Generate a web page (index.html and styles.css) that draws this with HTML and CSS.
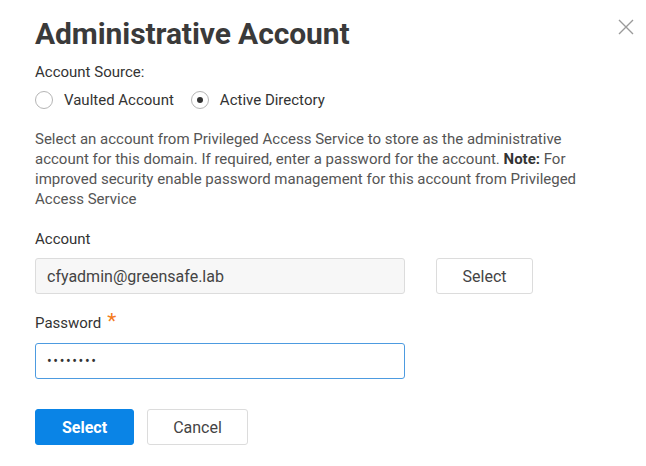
FILE: index.html
```html
<!DOCTYPE html>
<html>
<head>
<meta charset="utf-8">
<link rel="stylesheet" href="styles.css">
</head>
<body>
<div class="dialog">
  <div class="header">
    <h1 class="title">Administrative Account</h1>
    <svg class="close" width="16" height="16" viewBox="0 0 16 16"><path d="M1 1L15 15M15 1L1 15" stroke="#9a9a9a" stroke-width="1.4" fill="none"/></svg>
  </div>
  <div class="label source-label">Account Source:</div>
  <div class="radios">
    <label class="radio"><span class="circle"></span><span>Vaulted Account</span></label>
    <label class="radio"><span class="circle checked"></span><span>Active Directory</span></label>
  </div>
  <p class="desc">Select an account from Privileged Access Service to store as the administrative account for this domain. If required, enter a password for the account. <b>Note:</b> For improved security enable password management for this account from Privileged Access Service</p>
  <div class="label field-label">Account</div>
  <div class="row">
    <div class="input readonly">cfyadmin@greensafe.lab</div>
    <button class="btn btn-side">Select</button>
  </div>
  <div class="label field-label pw-label">Password <span class="req">*</span></div>
  <div class="input focused"><span class="dots">••••••••</span></div>
  <div class="actions">
    <button class="btn btn-primary">Select</button>
    <button class="btn btn-cancel">Cancel</button>
  </div>
</div>
</body>
</html>
```
FILE: styles.css
```css
html, body { margin: 0; padding: 0; background: #fff; }
body { font-family: Roboto, "Liberation Sans", sans-serif; color: #333; }
.dialog { padding: 15px 12px 0 35px; }
.header { display: flex; justify-content: space-between; align-items: flex-start; }
.title { margin: 0; font-size: 30px; font-weight: 700; color: #3a3a3a; line-height: 38px; letter-spacing: -0.1px; }
.close { margin-top: 4px; }
.label { font-size: 15px; color: #333; line-height: 18px; }
.source-label { margin-top: 10px; }
.radios { display: flex; gap: 17px; margin-top: 10px; font-size: 15px; }
.radio { display: flex; align-items: center; gap: 11px; line-height: 18px; color: #333; }
.circle { width: 18px; height: 18px; border: 1px solid #b5b5b5; border-radius: 50%; box-sizing: border-box; display: flex; align-items: center; justify-content: center; }
.circle.checked::after { content: ""; width: 6px; height: 6px; border-radius: 50%; background: #333; }
.desc { margin: 20px 0 0; font-size: 15px; line-height: 20px; color: #555; width: 580px; }
.desc b { color: #333; }
.field-label { margin-top: 21px; }
.row { display: flex; gap: 31px; margin-top: 10px; }
.input { box-sizing: border-box; width: 370px; height: 36px; border: 1px solid #dcdcdc; border-radius: 3px; padding: 0 11px; font-size: 16px; display: flex; align-items: center; color: #444; background: #fff; }
.input.readonly { background: #f7f7f7; }
.input.focused { border-color: #4d9be0; margin-top: 11px; }
.dots { letter-spacing: 1.6px; font-size: 14px; color: #333; }
.pw-label { margin-top: 20px; display: flex; align-items: flex-start; gap: 6px; }
.req { color: #f47b20; font-size: 21px; line-height: 14px; }
.btn { font-family: Roboto, "Liberation Sans", sans-serif; font-size: 16px; box-sizing: border-box; height: 36px; border-radius: 3px; cursor: pointer; }
.btn-side { width: 97px; background: #fff; border: 1px solid #dcdcdc; color: #444; }
.actions { display: flex; gap: 13px; margin-top: 30px; }
.btn-primary { width: 99px; background: #0a84e6; border: 1px solid #0a84e6; color: #fff; font-weight: 700; }
.btn-cancel { width: 101px; background: #fff; border: 1px solid #dcdcdc; color: #444; }
```
